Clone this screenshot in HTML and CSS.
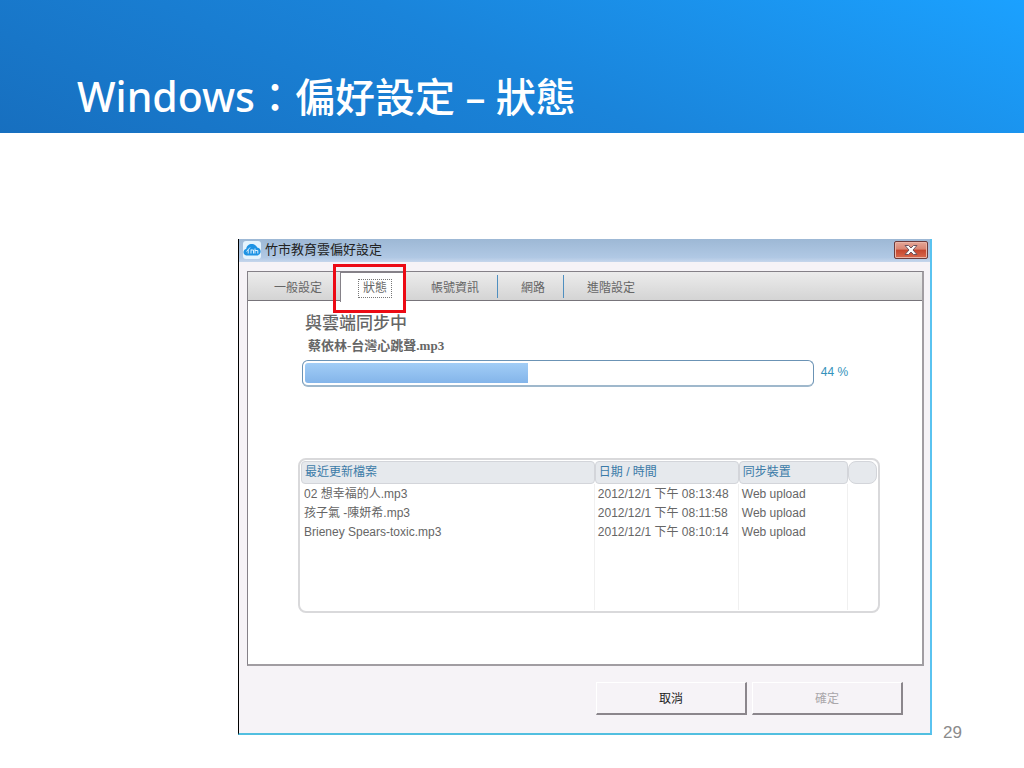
FILE: index.html
```html
<!DOCTYPE html>
<html lang="zh-Hant">
<head>
<meta charset="utf-8">
<meta name="viewport" content="width=device-width, initial-scale=1">
<title>Windows：偏好設定 – 狀態</title>
<link rel="stylesheet" href="styles.css">
</head>
<body>
<header class="banner">
  <h1 class="banner-title"><span class="banner-latin">Windows</span>：偏好設定 – 狀態</h1>
</header>
<main class="stage">
  <section class="dialog" aria-label="竹市教育雲偏好設定">
    <div class="titlebar">
      <svg class="app-icon" viewBox="0 0 18 18" aria-hidden="true">
        <rect x="0" y="0" width="18" height="18" rx="3" fill="#e4f3fd"/>
        <path d="M4 14.5C1.8 14.5.5 13 .5 11.200C.5 9.500 1.700 8.200 3.200 8C3.500 5 5.800 3 8.800 3C11.300 3 13.300 4.300 14.200 6.500C16.300 6.800 17.700 8.500 17.700 10.600C17.700 12.900 16 14.500 13.700 14.500Z" fill="#1e93e4"/>
        <path d="M3.500 10.500L7 6.500M5.200 8.700V12.500M8 8.500V12.500M8 9H10.500V12.500M12 7.500V12.500M12 9.500H14.800V12.500" fill="none" stroke="#d9f0ff" stroke-width="1"/>
      </svg>
      <h2 class="titlebar-text">竹市教育雲偏好設定</h2>
      <button class="close" type="button" aria-label="關閉">
        <svg class="close-icon" viewBox="0 0 14 10" aria-hidden="true">
          <path d="M1 .5H4.500L7 3L9.500 .5H13L9 5L13 9.500H9.500L7 7L4.500 9.500H1L5 5Z" fill="#fff" stroke="#6b5560" stroke-width="1"/>
        </svg>
      </button>
    </div>
    <div class="dialog-body">
      <div class="panel">
        <div class="tabs" role="tablist">
          <button class="tab" type="button" role="tab">一般設定</button>
          <button class="tab tab-active" type="button" role="tab" aria-selected="true"><span class="tab-focus">狀態</span></button>
          <button class="tab tab-wide" type="button" role="tab">帳號資訊</button>
          <button class="tab tab-divided" type="button" role="tab">網路</button>
          <button class="tab tab-divided" type="button" role="tab">進階設定</button>
        </div>
        <div class="status">
          <h3 class="sync-title">與雲端同步中</h3>
          <p class="sync-file">蔡依林-台灣心跳聲.mp3</p>
          <div class="progress-row">
            <div class="progress" role="progressbar" aria-label="同步進度" aria-valuenow="44" aria-valuemin="0" aria-valuemax="100">
              <div class="progress-fill" style="width: 44%"></div>
            </div>
            <span class="progress-value">44 %</span>
          </div>
          <div class="files">
            <table class="file-table">
              <colgroup><col class="col-name"><col class="col-date"><col class="col-device"><col></colgroup>
              <thead>
                <tr><th>最近更新檔案</th><th>日期 / 時間</th><th>同步裝置</th><th class="th-end"></th></tr>
              </thead>
              <tbody>
                <tr><td>02 想幸福的人.mp3</td><td>2012/12/1 下午 08:13:48</td><td>Web upload</td><td></td></tr>
                <tr><td>孩子氣 -陳妍希.mp3</td><td>2012/12/1 下午 08:11:58</td><td>Web upload</td><td></td></tr>
                <tr><td>Brieney Spears-toxic.mp3</td><td>2012/12/1 下午 08:10:14</td><td>Web upload</td><td></td></tr>
                <tr class="filler"><td></td><td></td><td></td><td></td></tr>
              </tbody>
            </table>
          </div>
        </div>
      </div>
      <div class="actions">
        <button class="action" type="button">取消</button>
        <button class="action" type="button" disabled>確定</button>
      </div>
    </div>
  </section>
  <span class="page-number">29</span>
</main>
</body>
</html>
```
FILE: styles.css
```css
* {
  box-sizing: border-box;
}

body {
  margin: 0;
  background: #fff;
  color: #666;
  font-family: "Liberation Sans", "Noto Sans CJK TC", sans-serif;
  font-size: 12px;
}

h1, h2, h3, p {
  margin: 0;
  font-weight: 400;
}

button {
  font: inherit;
  color: inherit;
  margin: 0;
  border: 0;
}

.banner {
  padding: 70px 77px 10px;
  background: linear-gradient(25deg, #176fbf, #1a84da 50%, #1ba1ff);
}

.banner-title {
  color: #fff;
  font-family: "Noto Sans", "Noto Sans CJK TC", sans-serif;
  font-size: 40px;
  font-weight: 500;
  line-height: 52px;
}

.banner-latin {
  font-size: 41px;
}

.stage {
  display: flex;
  align-items: flex-end;
  gap: 11px;
  padding: 106px 62px 24px 238px;
}

.page-number {
  color: #8b8b8b;
  font-size: 17px;
  line-height: 14px;
}

.dialog {
  flex: 1;
  margin-bottom: 5px;
  border-left: 1px solid #000;
  border-right: 2px solid #5ac3f0;
  border-bottom: 2px solid #52bfe0;
  background: #f6f3f7;
}

.titlebar {
  display: flex;
  align-items: center;
  gap: 4px;
  height: 23px;
  padding: 0 2px 2px 4px;
  background: linear-gradient(#9db8d5, #b0c8e4 80%, #c6d6ec);
}

.app-icon {
  width: 18px;
  height: 18px;
}

.titlebar-text {
  flex: 1;
  color: #222;
  font-size: 13px;
  line-height: 20px;
}

.close {
  display: flex;
  align-items: center;
  justify-content: center;
  width: 34px;
  height: 18px;
  padding: 0;
  border: 1px solid #6d3b3b;
  border-radius: 2px;
  background: linear-gradient(#e5a798, #d98572 45%, #c4452e 50%, #d8694e);
  box-shadow: inset 0 0 0 1px #eab5a8;
}

.close-icon {
  width: 14px;
  height: 10px;
}

.dialog-body {
  padding: 9px 6px 18px 8px;
}

.panel {
  border: 1px solid #858188;
  border-right: 2px solid #a19da2;
  border-bottom: 2px solid #a19da2;
  background: #fff;
}

.tabs {
  display: flex;
  height: 29px;
  border-bottom: 1px solid #77747a;
  background: linear-gradient(#ececec, #d4d4d4);
}

.tab {
  position: relative;
  padding: 3px 18px 0 24px;
  background: none;
  line-height: 24px;
}

.tab:first-child {
  padding-left: 26px;
}

.tab-active {
  height: 30px;
  padding: 1px 14px 0 17px;
  background: #fff;
  border-left: 1px solid #858188;
  border-top: 1px solid #858188;
}

/* Highlight frame around the current tab. */
.tab-active::after {
  content: "";
  position: absolute;
  z-index: 1;
  inset: -9px 0 -11px -8px;
  border: 3px solid #ec0a14;
}

.tab-focus {
  display: block;
  padding: 0 4px;
  border: 1px dotted #777;
  line-height: 17px;
}

.tab-wide {
  padding-left: 25px;
}

.tab-divided::before {
  content: "";
  position: absolute;
  left: 0;
  top: 3px;
  bottom: 2px;
  border-left: 1px solid #4f8fc0;
}

.status {
  padding: 11px 43px 51px 50px;
}

.sync-title {
  padding-left: 7px;
  font-family: "Liberation Serif", "Noto Sans CJK TC", serif;
  font-size: 17px;
  font-weight: 500;
  line-height: 24px;
}

.sync-file {
  padding-left: 10px;
  font-family: "Liberation Serif", "Noto Sans CJK TC", serif;
  font-size: 13px;
  font-weight: 700;
  line-height: 20px;
}

.progress-row {
  display: flex;
  gap: 7px;
  padding: 4px 31px 0 4px;
}

.progress {
  flex: 1;
  height: 27px;
  padding: 2px;
  border: 1px solid #6b93b5;
  border-bottom: 2px solid #9fb8cc;
  border-radius: 6px;
}

.progress-fill {
  height: 100%;
  border-radius: 3px 0 0 3px;
  background: linear-gradient(#a2cdf6, #84b5ea);
}

.progress-value {
  color: #3492bb;
  font-size: 12px;
  line-height: 24px;
}

.files {
  margin: 71px -1px 0 0;
  padding: 1px;
  border: 2px solid #d9d9db;
  border-radius: 8px;
}

.file-table {
  width: 100%;
  table-layout: fixed;
  border-collapse: separate;
  border-spacing: 0;
}

.col-name {
  width: 51%;
}

.col-date {
  width: 25%;
}

.col-device {
  width: 19%;
}

.file-table th {
  height: 23px;
  padding: 0 3px;
  border: 1px solid #d3d5da;
  border-radius: 4px;
  background: #e6e9ed;
  color: #3b7ba8;
  font-weight: 400;
  line-height: 21px;
  text-align: left;
}

.file-table .th-end {
  border-radius: 8px;
}

.file-table td {
  padding: 2px 3px 0;
  border-right: 1px solid #f0f0f0;
  line-height: 17px;
  white-space: nowrap;
}

.file-table td:last-child {
  border-right: 0;
}

.file-table .filler td {
  height: 69px;
}

.actions {
  display: flex;
  justify-content: flex-end;
  gap: 5px;
  padding: 16px 21px 0 0;
}

.action {
  width: 151px;
  height: 33px;
  padding: 0 0 2px;
  border: 1px solid #fff;
  border-right: 2px solid #8b868c;
  border-bottom: 2px solid #8b868c;
  background: #f6f3f7;
  color: #222;
}

.action:disabled {
  color: #aaa7ab;
}
```
